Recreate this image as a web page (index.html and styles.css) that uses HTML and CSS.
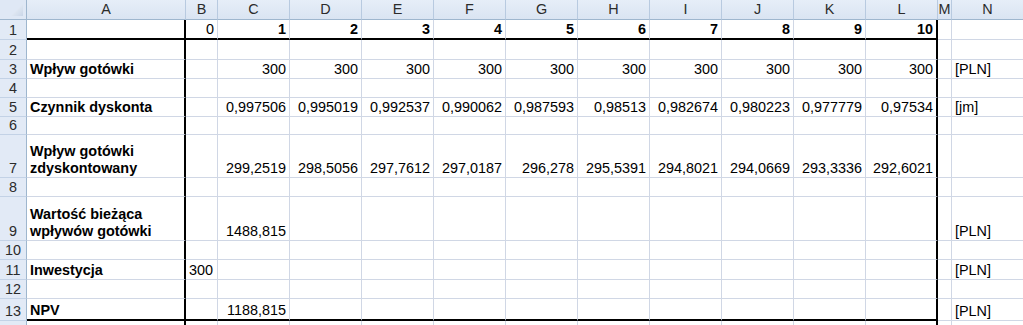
FILE: index.html
```html
<!DOCTYPE html>
<html lang="pl">
<head>
<meta charset="utf-8">
<title>NPV</title>
<link rel="stylesheet" href="styles.css">
</head>
<body>
<div class="sheet">
  <!-- header row -->
  <div class="corner"><span class="tri"></span></div>
  <div class="ch">A</div><div class="ch">B</div><div class="ch">C</div><div class="ch">D</div><div class="ch">E</div><div class="ch">F</div><div class="ch">G</div><div class="ch">H</div><div class="ch">I</div><div class="ch">J</div><div class="ch">K</div><div class="ch">L</div><div class="ch">M</div><div class="ch">N</div>

  <!-- row 1 -->
  <div class="rh">1</div>
  <div class="c tb tr"></div><div class="c tb num">0</div>
  <div class="c tb num b">1</div><div class="c tb num b">2</div><div class="c tb num b">3</div><div class="c tb num b">4</div><div class="c tb num b">5</div><div class="c tb num b">6</div><div class="c tb num b">7</div><div class="c tb num b">8</div><div class="c tb num b">9</div><div class="c tb tr num b">10</div>
  <div class="c"></div><div class="c"></div>

  <!-- row 2 -->
  <div class="rh">2</div>
  <div class="c tr"></div><div class="c"></div><div class="c"></div><div class="c"></div><div class="c"></div><div class="c"></div><div class="c"></div><div class="c"></div><div class="c"></div><div class="c"></div><div class="c"></div><div class="c tr"></div><div class="c"></div><div class="c"></div>

  <!-- row 3 -->
  <div class="rh">3</div>
  <div class="c tr b">Wpływ gotówki</div><div class="c"></div>
  <div class="c num">300</div><div class="c num">300</div><div class="c num">300</div><div class="c num">300</div><div class="c num">300</div><div class="c num">300</div><div class="c num">300</div><div class="c num">300</div><div class="c num">300</div><div class="c tr num">300</div>
  <div class="c"></div><div class="c">[PLN]</div>

  <!-- row 4 -->
  <div class="rh">4</div>
  <div class="c tr"></div><div class="c"></div><div class="c"></div><div class="c"></div><div class="c"></div><div class="c"></div><div class="c"></div><div class="c"></div><div class="c"></div><div class="c"></div><div class="c"></div><div class="c tr"></div><div class="c"></div><div class="c"></div>

  <!-- row 5 -->
  <div class="rh">5</div>
  <div class="c tr b">Czynnik dyskonta</div><div class="c"></div>
  <div class="c num">0,997506</div><div class="c num">0,995019</div><div class="c num">0,992537</div><div class="c num">0,990062</div><div class="c num">0,987593</div><div class="c num">0,98513</div><div class="c num">0,982674</div><div class="c num">0,980223</div><div class="c num">0,977779</div><div class="c tr num">0,97534</div>
  <div class="c"></div><div class="c">[jm]</div>

  <!-- row 6 -->
  <div class="rh">6</div>
  <div class="c tr"></div><div class="c"></div><div class="c"></div><div class="c"></div><div class="c"></div><div class="c"></div><div class="c"></div><div class="c"></div><div class="c"></div><div class="c"></div><div class="c"></div><div class="c tr"></div><div class="c"></div><div class="c"></div>

  <!-- row 7 -->
  <div class="rh">7</div>
  <div class="c tr b">Wpływ gotówki<br>zdyskontowany</div><div class="c"></div>
  <div class="c num">299,2519</div><div class="c num">298,5056</div><div class="c num">297,7612</div><div class="c num">297,0187</div><div class="c num">296,278</div><div class="c num">295,5391</div><div class="c num">294,8021</div><div class="c num">294,0669</div><div class="c num">293,3336</div><div class="c tr num">292,6021</div>
  <div class="c"></div><div class="c"></div>

  <!-- row 8 -->
  <div class="rh">8</div>
  <div class="c tr"></div><div class="c"></div><div class="c"></div><div class="c"></div><div class="c"></div><div class="c"></div><div class="c"></div><div class="c"></div><div class="c"></div><div class="c"></div><div class="c"></div><div class="c tr"></div><div class="c"></div><div class="c"></div>

  <!-- row 9 -->
  <div class="rh">9</div>
  <div class="c tr b">Wartość bieżąca<br>wpływów gotówki</div><div class="c"></div>
  <div class="c num">1488,815</div><div class="c"></div><div class="c"></div><div class="c"></div><div class="c"></div><div class="c"></div><div class="c"></div><div class="c"></div><div class="c"></div><div class="c tr"></div>
  <div class="c"></div><div class="c">[PLN]</div>

  <!-- row 10 -->
  <div class="rh">10</div>
  <div class="c tr"></div><div class="c"></div><div class="c"></div><div class="c"></div><div class="c"></div><div class="c"></div><div class="c"></div><div class="c"></div><div class="c"></div><div class="c"></div><div class="c"></div><div class="c tr"></div><div class="c"></div><div class="c"></div>

  <!-- row 11 -->
  <div class="rh">11</div>
  <div class="c tr b">Inwestycja</div><div class="c">300</div>
  <div class="c"></div><div class="c"></div><div class="c"></div><div class="c"></div><div class="c"></div><div class="c"></div><div class="c"></div><div class="c"></div><div class="c"></div><div class="c tr"></div>
  <div class="c"></div><div class="c">[PLN]</div>

  <!-- row 12 -->
  <div class="rh">12</div>
  <div class="c tr"></div><div class="c"></div><div class="c"></div><div class="c"></div><div class="c"></div><div class="c"></div><div class="c"></div><div class="c"></div><div class="c"></div><div class="c"></div><div class="c"></div><div class="c tr"></div><div class="c"></div><div class="c"></div>

  <!-- row 13 -->
  <div class="rh">13</div>
  <div class="c tb tr b">NPV</div><div class="c tb"></div>
  <div class="c tb num">1188,815</div><div class="c tb"></div><div class="c tb"></div><div class="c tb"></div><div class="c tb"></div><div class="c tb"></div><div class="c tb"></div><div class="c tb"></div><div class="c tb"></div><div class="c tb tr"></div>
  <div class="c"></div><div class="c">[PLN]</div>

  <!-- row 14 -->
  <div class="rh">14</div>
  <div class="c tr"></div><div class="c"></div><div class="c"></div><div class="c"></div><div class="c"></div><div class="c"></div><div class="c"></div><div class="c"></div><div class="c"></div><div class="c"></div><div class="c"></div><div class="c tr"></div><div class="c"></div><div class="c"></div>
</div>
</body>
</html>
```

FILE: styles.css
```css
* {
  box-sizing: border-box;
}

html, body {
  margin: 0;
  padding: 0;
  background: #ffffff;
  overflow: hidden;
}

.sheet {
  display: grid;
  grid-template-columns: 27px 159px 32px repeat(10, 72px) 14px 72px;
  grid-template-rows: 20px 20px 20px 19px 19px 19px 18px 43px 19px 44px 19px 20px 19px 22px 20px;
  font-family: "Liberation Sans", Arial, sans-serif;
  font-size: 14.4px;
  color: #000;
  width: 1024px;
}

.corner {
  position: relative;
  background: #dfe8f5;
  border-right: 1px solid #9eb6ce;
  border-bottom: 1px solid #9eb6ce;
}

.tri {
  position: absolute;
  right: 3px;
  bottom: 3px;
  width: 12px;
  height: 12px;
  background: linear-gradient(135deg, #f4f7fb, #c9d6e8);
  clip-path: polygon(100% 0, 100% 100%, 0 100%);
}

.ch {
  display: flex;
  align-items: center;
  justify-content: center;
  background: linear-gradient(#e6eef8, #dae4f2);
  border-right: 1px solid #b8cae0;
  border-bottom: 1px solid #9eb6ce;
  color: #2b2b2b;
  line-height: 17px;
  padding-bottom: 1px;
}

.rh {
  display: flex;
  align-items: flex-end;
  justify-content: center;
  background: #e2eaf6;
  border-right: 1px solid #9eb6ce;
  border-bottom: 1px solid #c3d2e6;
  color: #2b2b2b;
  line-height: 17px;
}

.c {
  display: flex;
  align-items: flex-end;
  justify-content: flex-start;
  border-right: 1px solid #d0d7e5;
  border-bottom: 1px solid #d0d7e5;
  padding: 0 3px 0 3px;
  line-height: 17px;
  white-space: nowrap;
  overflow: visible;
}

.num {
  justify-content: flex-end;
}

.b {
  font-weight: bold;
}

.tb {
  border-bottom: 2px solid #000;
}

.tr {
  border-right: 2px solid #000;
}
```
